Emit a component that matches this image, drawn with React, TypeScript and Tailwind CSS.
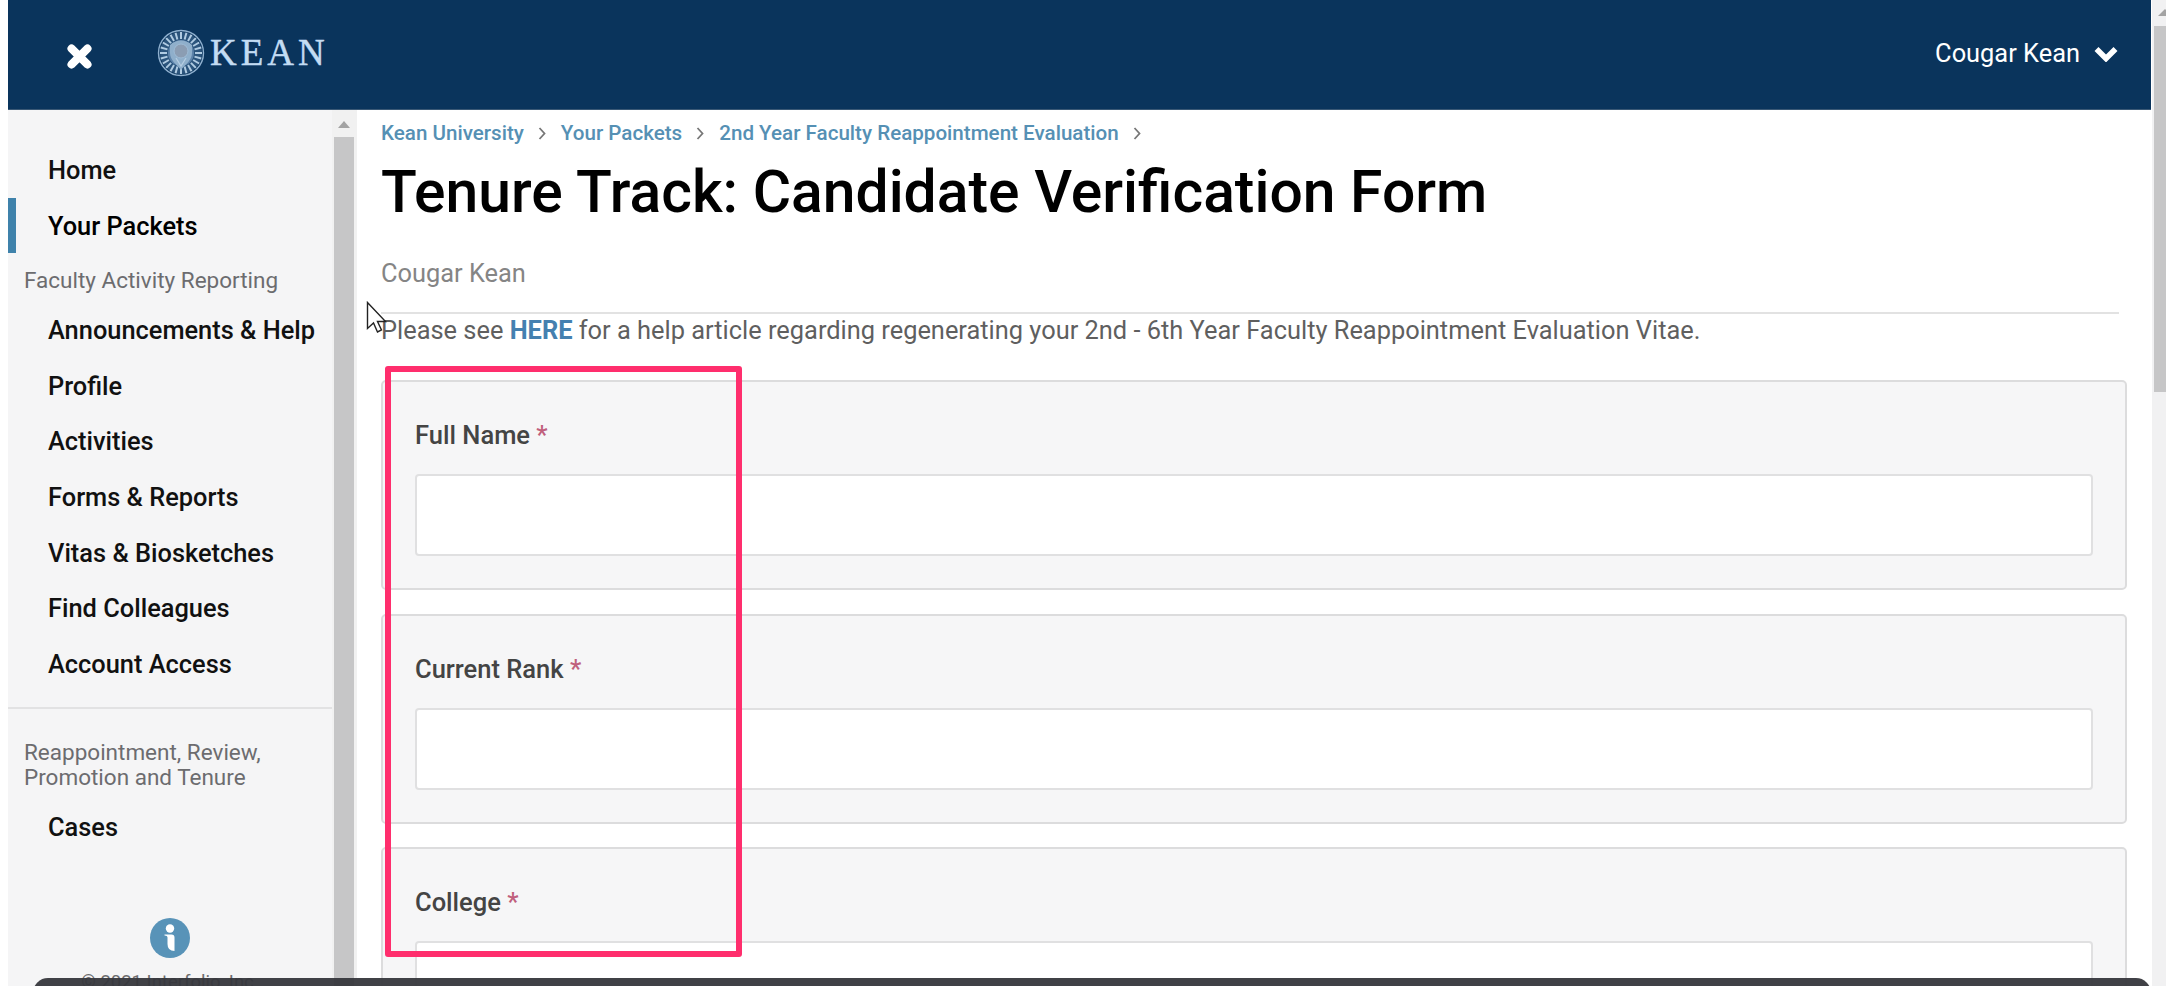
import React from 'react';

const REPORTING_LINKS = [
  'Announcements & Help',
  'Profile',
  'Activities',
  'Forms & Reports',
  'Vitas & Biosketches',
  'Find Colleagues',
  'Account Access',
];

const BREADCRUMBS = ['Kean University', 'Your Packets', '2nd Year Faculty Reappointment Evaluation'];

const FIELDS = ['Full Name', 'Current Rank', 'College'];

const SEAL_RAYS = Array.from({ length: 24 }, (_, i) => i * 15);

const KeanLogo = () => (
  <div className="flex items-center">
    <svg width="48" height="48" viewBox="0 0 48 48" fill="none">
      <circle cx="24" cy="24" r="22.5" stroke="#8fb0cf" strokeWidth="1.4" />
      <circle cx="24" cy="24" r="21" fill="#5f87ae" fillOpacity="0.4" />
      {SEAL_RAYS.map((angle) => (
        <path
          key={angle}
          d="M24 3v7"
          stroke="#b0cbe2"
          strokeWidth="2"
          transform={`rotate(${angle} 24 24)`}
        />
      ))}
      <circle cx="24" cy="24" r="13" fill="#5d83aa" />
      <path d="M13 16c6-6 16-6 22 0v8c0 7-6 11-11 17-5-6-11-10-11-17z" fill="#8fafcb" />
      <circle cx="24" cy="22" r="7" fill="#8b9db3" stroke="#9fbcd6" strokeWidth="1" />
      <path d="M19 29l5 8 5-8" stroke="#b5cde2" strokeWidth="1.2" />
    </svg>
    <span className="ml-[5px] font-['Liberation_Serif',serif] text-[37px] leading-[48px] tracking-[4px] text-[#c3dcf3] [-webkit-text-stroke:0.4px_#c3dcf3]">
      KEAN
    </span>
  </div>
);

const Header = () => (
  <header className="flex h-[110px] shrink-0 border-b border-[#3a5875] bg-[#0a345c] pl-[58px] pr-[33px]">
    <svg className="mt-[43px] shrink-0" width="27" height="27" viewBox="0 0 27 27">
      <path d="M5 5l17 17M22 5L5 22" stroke="#fff" strokeWidth="8" strokeLinecap="butt" />
      <path d="M5.5 5.5l16 16M21.5 5.5l-16 16" stroke="#fff" strokeWidth="8" strokeLinecap="round" />
    </svg>
    <div className="ml-[64px] mt-[29px]">
      <KeanLogo />
    </div>
    <button className="ml-auto mt-[35px] flex h-[36px] items-center gap-[14px] text-[25.4px] text-white">
      Cougar Kean
      <svg className="mt-[2px]" width="24" height="16" viewBox="0 0 24 16" fill="none">
        <path d="M2.5 3l9.500 9.500L21.500 3" stroke="#fff" strokeWidth="5.6" />
      </svg>
    </button>
  </header>
);

const NavItem = ({ label, active = false }: { label: string; active?: boolean }) => (
  <a
    className={`block h-[55.7px] border-l-8 pl-[32px] text-[25.4px] font-medium leading-[56px] whitespace-nowrap ${
      active ? 'border-[#3f82ab] text-black' : 'border-transparent text-[#111]'
    }`}
  >
    {label}
  </a>
);

const Sidebar = () => (
  <aside className="flex w-[349px] shrink-0 bg-[#f5f5f6]">
    <nav className="w-[324px] pt-[32px]">
      <NavItem label="Home" />
      <NavItem label="Your Packets" active />
      <h2 className="h-[48.5px] pl-[16px] pt-[15px] text-[22.5px] leading-[25px] whitespace-nowrap text-[#6c6c6f]">
        Faculty Activity Reporting
      </h2>
      {REPORTING_LINKS.map((label) => (
        <NavItem key={label} label={label} />
      ))}
      <div className="mt-[15.5px] border-t-2 border-[#e2e2e3]" />
      <h2 className="pl-[16px] pt-[31px] text-[22.5px] leading-[25px] whitespace-nowrap text-[#6c6c6f]">
        Reappointment, Review,
        <br />
        Promotion and Tenure
      </h2>
      <div className="pt-[9px]">
        <NavItem label="Cases" />
      </div>
      <div className="flex flex-col items-center pt-[63px]">
        <svg width="40" height="40" viewBox="0 0 40 40">
          <circle cx="20" cy="20" r="20" fill="#5893b8" />
          <circle cx="20" cy="10.500" r="4.200" fill="#fff" />
          <path d="M14.500 16.500h7q3 0 3 3V33q-7 0-7-7v-6.500q0-2-3-2z" fill="#fff" />
        </svg>
        <p className="mt-[14px] text-[18.5px] leading-[20px] whitespace-nowrap text-[#6c6c6f]">© 2021 Interfolio, Inc.</p>
      </div>
    </nav>
    {/* scrollbar */}
    <div className="flex w-[25px] flex-col items-center bg-[#f1f1f1] pr-px">
      <svg className="mt-[11px] shrink-0" width="12" height="7" viewBox="0 0 12 7">
        <path d="M0 7l6-7 6 7z" fill="#a3a3a3" />
      </svg>
      <div className="mt-[9px] w-[20px] flex-1 bg-[#c6c6c7]" />
    </div>
  </aside>
);

const FieldCard = ({ label }: { label: string }) => (
  <div className="h-[210px] shrink-0 rounded-[5px] border-2 border-[#dcdcdd] bg-[#f6f6f7] px-[32px] pt-[36px]">
    <label className="block text-[25.5px] font-medium leading-[34px] text-[#444]">
      {label} <span className="text-[#c0607c]">*</span>
    </label>
    <input
      type="text"
      className="mt-[22px] block h-[82px] w-full rounded-[4px] border-2 border-[#e0e0e1] bg-white outline-none"
    />
  </div>
);

const Content = () => (
  <main className="flex min-w-0 flex-1 flex-col pl-[24px] pr-[24px]">
    <div className="flex h-[34px] shrink-0 items-center pt-[12px] text-[20.6px] font-medium leading-[20px] text-[#5590b4]">
      {BREADCRUMBS.map((crumb) => (
        <React.Fragment key={crumb}>
          <a className="whitespace-nowrap">{crumb}</a>
          <svg className="mx-[14px]" width="9" height="13" viewBox="0 0 9 13" fill="none">
            <path d="M1.500 1l5 5.500-5 5.500" stroke="#777" strokeWidth="1.8" />
          </svg>
        </React.Fragment>
      ))}
    </div>
    <h1 className="mt-[13px] text-[58.8px] font-medium leading-[70px] whitespace-nowrap text-black">
      Tenure Track: Candidate Verification Form
    </h1>
    <p className="mt-[29px] text-[25.4px] leading-[34px] text-[#858585]">Cougar Kean</p>
    <div className="mr-[8px] mt-[22px] border-t-2 border-[#e2e2e2]" />
    <p className="-mt-px text-[25.4px] leading-[34px] whitespace-nowrap text-[#5f5f5f]">
      Please see <a className="font-bold text-[#4480b0]">HERE</a> for a help article regarding regenerating your 2nd - 6th
      Year Faculty Reappointment Evaluation Vitae.
    </p>
    <div className="mt-[33px] flex flex-col gap-[23.6px]">
      {FIELDS.map((label) => (
        <FieldCard key={label} label={label} />
      ))}
    </div>
  </main>
);

export default function App() {
  return (
    <div className="relative flex h-[986px] w-[2166px] overflow-hidden bg-white pl-[8px] font-[Roboto,sans-serif]">
      <div className="flex min-w-0 flex-1 flex-col">
        <Header />
        <div className="flex min-h-0 flex-1">
          <Sidebar />
          <Content />
        </div>
      </div>

      {/* page scrollbar */}
      <div className="ml-px w-[14px] shrink-0 overflow-hidden bg-[#f1f1f2] pl-[2px]">
        <svg className="ml-[4px] mt-[9px]" width="14" height="7" viewBox="0 0 14 7">
          <path d="M0 7l7-7 7 7z" fill="#a3a3a3" />
        </svg>
        <div className="mt-[10px] h-[366px] bg-[#c6c6c7]" />
      </div>

      {/* highlight around the form labels */}
      <div className="absolute left-[385px] top-[366px] h-[591px] w-[357px] rounded-[3px] border-[6px] border-[#ff2e6d]" />

      {/* mouse pointer */}
      <svg className="absolute left-[366px] top-[301px]" width="22" height="32" viewBox="0 0 22 32">
        <path
          d="M1.500 1.500v26l6-5.500 4 9 4-2-4-8.500h8z"
          fill="#fff"
          stroke="#222"
          strokeWidth="1.4"
        />
      </svg>

      {/* top edge of the docked player bar */}
      <div className="absolute left-[33px] top-[978px] h-[30px] w-[2118px] rounded-[15px] bg-[#36373c]/95" />
    </div>
  );
}
